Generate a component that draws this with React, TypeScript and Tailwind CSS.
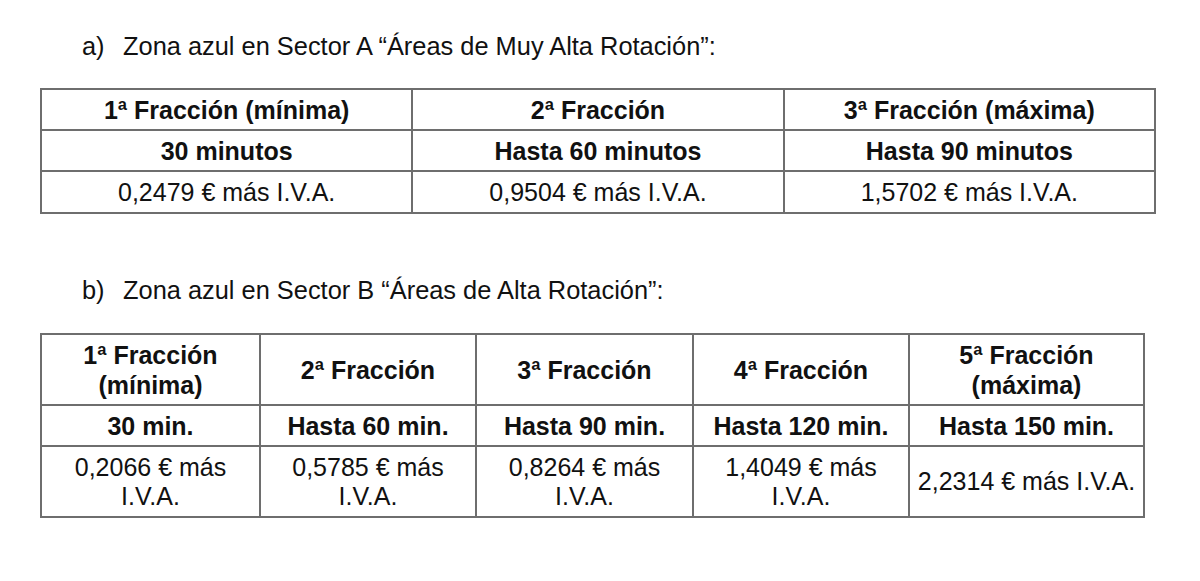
export default function App() {
  const tableA = [
    ["1ª Fracción (mínima)", "2ª Fracción", "3ª Fracción (máxima)"],
    ["30 minutos", "Hasta 60 minutos", "Hasta 90 minutos"],
    ["0,2479 € más I.V.A.", "0,9504 € más I.V.A.", "1,5702 € más I.V.A."],
  ]
  const headB = [
    ["1ª Fracción", "(mínima)"],
    ["2ª Fracción"],
    ["3ª Fracción"],
    ["4ª Fracción"],
    ["5ª Fracción", "(máxima)"],
  ]
  const timeB = ["30 min.", "Hasta 60 min.", "Hasta 90 min.", "Hasta 120 min.", "Hasta 150 min."]
  const priceB = [
    ["0,2066 € más", "I.V.A."],
    ["0,5785 € más", "I.V.A."],
    ["0,8264 € más", "I.V.A."],
    ["1,4049 € más", "I.V.A."],
    ["2,2314 € más I.V.A."],
  ]
  const widthsB = ["w-[219px]", "w-[216px]", "w-[217px]", "w-[216px]", "w-[235px]"]

  return (
    <div className="h-[581px] w-[1200px] bg-white pl-[40px] pt-[32px] font-['Liberation_Sans',Arial,sans-serif] text-[#111]">
      <p className="flex h-[28px] items-center pl-[42px] text-[25.4px]">
        <span className="w-[41px]">a)</span>
        <span>Zona azul en Sector A “Áreas de Muy Alta Rotación”:</span>
      </p>

      <table className="mt-[28px] w-[1116px] table-fixed border-collapse text-center text-[25px]">
        <tbody>
          {tableA.map((row, i) => (
            <tr key={i} className={i === 2 ? "h-[42px]" : "h-[41px]"}>
              {row.map((cell) => (
                <td
                  key={cell}
                  className={`border-2 border-[#6e6e6e] p-0 leading-[28px] ${i < 2 ? "font-bold" : ""}`}
                >
                  {cell}
                </td>
              ))}
            </tr>
          ))}
        </tbody>
      </table>

      <p className="mt-[62px] flex h-[28px] items-center pl-[42px] text-[25.4px]">
        <span className="w-[41px]">b)</span>
        <span>Zona azul en Sector B “Áreas de Alta Rotación”:</span>
      </p>

      <table className="mt-[29px] w-[1103px] table-fixed border-collapse text-center text-[25px]">
        <tbody>
          <tr className="h-[71px]">
            {headB.map((lines, i) => (
              <td key={i} className={`${widthsB[i]} border-2 border-[#6e6e6e] p-0 font-bold leading-[30px]`}>
                {lines.map((l) => (
                  <div key={l}>{l}</div>
                ))}
              </td>
            ))}
          </tr>
          <tr className="h-[41px]">
            {timeB.map((t) => (
              <td key={t} className="border-2 border-[#6e6e6e] p-0 font-bold leading-[28px]">
                {t}
              </td>
            ))}
          </tr>
          <tr className="h-[71px]">
            {priceB.map((lines, i) => (
              <td key={i} className="border-2 border-[#6e6e6e] p-0 leading-[29px] whitespace-nowrap">
                {lines.map((l) => (
                  <div key={l}>{l}</div>
                ))}
              </td>
            ))}
          </tr>
        </tbody>
      </table>
    </div>
  )
}
